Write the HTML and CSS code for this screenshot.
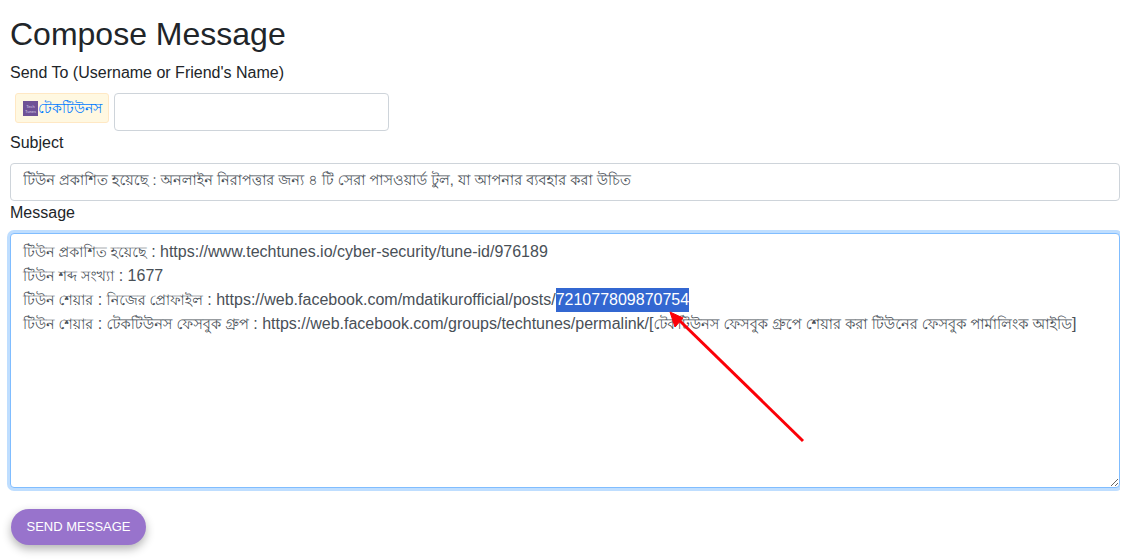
FILE: index.html
```html
<!DOCTYPE html>
<html>
<head>
  <title>Compose Message</title>
  <link rel="stylesheet" href="styles.css">
</head>

<body>
  <form class="compose">
    <h2 class="title">Compose Message</h2>

    <label class="field-label">Send To (Username or Friend's Name)</label>
    <div class="recipient-row">
      <span class="chip">
        <svg class="chip-logo" viewBox="0 0 15 15" width="15" height="15">
          <rect width="15" height="15" fill="#6f5296"/>
          <text x="7.5" y="6.5" class="logo-text">Tech</text>
          <text x="7.5" y="11.5" class="logo-text">Tunes</text>
        </svg><a class="chip-name">টেকটিউনস</a>
      </span>
      <input class="control recipient-input" type="text">
    </div>

    <label class="field-label">Subject</label>
    <input class="control subject-input" type="text" value="টিউন প্রকাশিত হয়েছে : অনলাইন নিরাপত্তার জন্য ৪ টি সেরা পাসওয়ার্ড টুল, যা আপনার ব্যবহার করা উচিত">

    <label class="field-label message-label">Message</label>
    <div class="message-box">
      <div class="message-line"><span class="bn">টিউন প্রকাশিত হয়েছে</span> : https://www.techtunes.io/cyber-security/tune-id/976189</div>
      <div class="message-line"><span class="bn">টিউন শব্দ সংখ্যা</span> : 1677</div>
      <div class="message-line"><span class="bn">টিউন শেয়ার</span> : <span class="bn">নিজের প্রোফাইল</span> : https://web.facebook.com/mdatikurofficial/posts/<span class="selected">721077809870754</span></div>
      <div class="message-line"><span class="bn">টিউন শেয়ার</span> : <span class="bn bn-wide">টেকটিউনস ফেসবুক গ্রুপ</span> : https://web.facebook.com/groups/techtunes/permalink/[<span class="bn bn-wide">টেকটিউনস ফেসবুক গ্রুপে শেয়ার করা টিউনের ফেসবুক পার্মালিংক আইডি</span>]</div>
    </div>

    <button class="send-btn" type="button">SEND MESSAGE</button>
  </form>

  <!-- red arrow drawn on top of the screenshot -->
  <svg class="arrow" width="1129" height="559" viewBox="0 0 1129 559">
    <line x1="803" y1="441" x2="680" y2="321" stroke="#fb0007" stroke-width="3"/>
    <polygon points="670,312 683,318 675,327" fill="#fb0007" stroke="#fb0007" stroke-width="1"/>
  </svg>
</body>

</html>
```

FILE: styles.css
```css
html, body {
  margin: 0;
  background: #fff;
}

body {
  font-family: "Liberation Sans", "Noto Sans", sans-serif;
  font-size: 16px;
  color: #212529;
  line-height: 24px;
}

.compose {
  width: 1110px;
  padding: 15px 0 0 10px;
  height: 544px;
  overflow: hidden;
}

.title {
  margin: 0 0 8px;
  font-size: 32px;
  font-weight: 500;
  line-height: 38px;
}

.field-label {
  display: block;
  line-height: 24px;
}

.recipient-row {
  display: flex;
  align-items: flex-start;
  margin-top: 8px;
}

.chip {
  display: flex;
  align-items: center;
  box-sizing: border-box;
  width: 94px;
  height: 30px;
  margin: 0 5px;
  padding-left: 7px;
  background: #fff8e1;
  border: 1px solid #ffe8c4;
  border-radius: 3px;
  font-size: 14px;
}

.logo-text {
  font-size: 4px;
  fill: #d9cfe6;
  text-anchor: middle;
}

.chip-name {
  color: #007bff;
}

.control {
  display: block;
  box-sizing: border-box;
  height: 38px;
  padding: 6px 12px;
  font: inherit;
  color: #495057;
  background: #fff;
  border: 1px solid #ced4da;
  border-radius: 4px;
}

.recipient-input {
  width: 275px;
}

.subject-input {
  width: 100%;
  margin-top: 8px;
  font-size: 14.5px;
  text-rendering: geometricPrecision;
}

.message-box {
  box-sizing: border-box;
  width: 100%;
  height: 255px;
  margin-top: 8px;
  padding: 6px 12px;
  color: #495057;
  background: #fff;
  border: 1px solid #80bdff;
  border-radius: 4px;
  box-shadow: 0 0 0 3px #bfdeff;
  overflow: auto;
  resize: vertical;
}

.message-line {
  height: 24px;
  white-space: nowrap;
}

.bn {
  font-size: 14.3px;
  text-rendering: geometricPrecision;
}

.bn-wide {
  font-size: 14.6px;
}

.selected {
  display: inline-block;
  height: 24px;
  color: #fff;
  background: #3367d1;
}

.send-btn {
  display: block;
  width: 135px;
  height: 36px;
  margin: 21px 0 0 1px;
  padding: 0;
  font: inherit;
  font-size: 13px;
  color: #fff;
  background: #9873cc;
  border: 0;
  border-radius: 18px;
  box-shadow: 0 4px 10px rgba(0, 0, 0, 0.3);
}

.arrow {
  position: absolute;
  left: 0;
  top: 0;
  pointer-events: none;
}
```
